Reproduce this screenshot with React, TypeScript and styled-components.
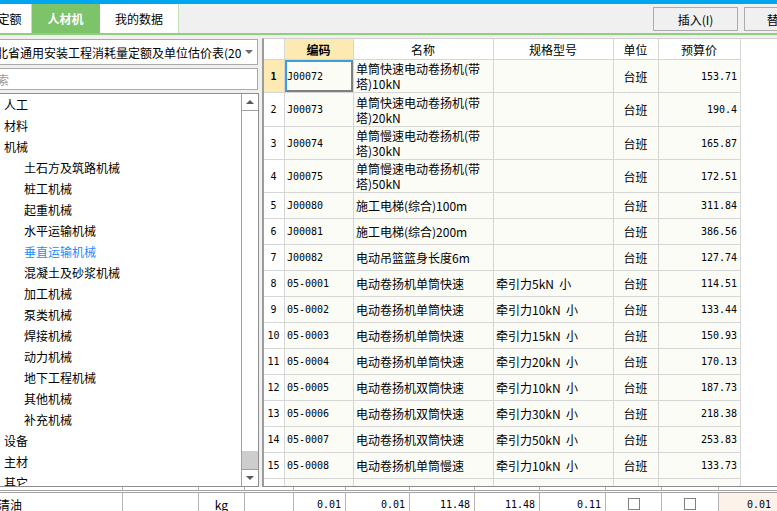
import React from "react";
import styled, { createGlobalStyle, css } from "styled-components";

const Global = createGlobalStyle`
  html, body { margin: 0; padding: 0; }
  body {
    width: 777px; height: 511px; overflow: hidden; background: #f0f0f0;
    font-family: "Noto Sans CJK SC", "Noto Sans", sans-serif; font-size: 12px; color: #000;
  }
  * { box-sizing: border-box; }
`;

const Shell = styled.div`
  width: 777px; height: 511px; display: flex; flex-direction: column;
  overflow: hidden; background: #f0f0f0;
`;

const TopLine = styled.div`
  height: 4px; flex-shrink: 0; background: #00a7ee;
`;

const Toolbar = styled.div`
  height: 31px; flex-shrink: 0; display: flex; align-items: stretch;
  border-bottom: 2px solid #8fd07c; overflow: hidden;
`;

const Tab = styled.div<{ $active?: boolean; $w: number }>`
  width: ${(p) => p.$w}px; flex-shrink: 0; display: flex; align-items: center; justify-content: center;
  background: ${(p) => (p.$active ? "#7cc36a" : "#ffffff")};
  color: ${(p) => (p.$active ? "#ffffff" : "#000000")};
  font-weight: ${(p) => (p.$active ? 700 : 400)};
  border-right: 1px solid ${(p) => (p.$active ? "#7cc36a" : "#bfe3b3")};
`;

const EdgeTab = styled(Tab)`
  margin-left: -12px;
`;

const ButtonGroup = styled.div`
  display: flex; gap: 6px; margin-left: 474px; padding-top: 3px; flex-shrink: 0;
`;

const ToolButton = styled.div`
  width: 85px; height: 24px; flex-shrink: 0; display: flex; align-items: center; justify-content: center;
  border: 1px solid #adadad; background: #f0f0f0; font-size: 12px;
`;

const Main = styled.div`
  height: 452px; flex-shrink: 0; display: flex; padding-top: 3px;
`;

const LeftPanel = styled.div`
  width: 279px; margin-left: -20px; flex-shrink: 0; display: flex; flex-direction: column; padding-top: 1px;
`;

const Select = styled.div`
  height: 26px; flex-shrink: 0; margin-right: 1px; display: flex; align-items: center;
  border: 1px solid #a9a9a9; background: #fff;
`;

const SelectText = styled.div`
  flex: 1; padding-left: 3px; white-space: nowrap; overflow: hidden;
`;

const Caret = styled.div<{ $dir: "up" | "down"; $color?: string }>`
  width: 0; height: 0; border-left: 4px solid transparent; border-right: 4px solid transparent;
  ${(p) =>
    p.$dir === "down"
      ? css`border-top: 4px solid ${p.$color || "#6d6d6d"};`
      : css`border-bottom: 4px solid ${p.$color || "#5a5a5a"};`}
`;

const SelectArrow = styled.div`
  width: 16px; flex-shrink: 0; display: flex; align-items: center; justify-content: center;
`;

const Search = styled.div`
  height: 22px; flex-shrink: 0; margin-top: 3px; margin-right: 1px; display: flex; align-items: center;
  padding-left: 4px; border: 1px solid #a9a9a9; background: #fff; color: #9a9a9a; white-space: nowrap;
`;

const TreeBox = styled.div`
  flex: 1; margin-top: 3px; display: flex; border: 1px solid #8e8e8e; background: #fff; min-height: 0;
`;

const TreeList = styled.div`
  flex: 1; overflow: hidden;
`;

const TreeItem = styled.div<{ $level: number; $active?: boolean }>`
  height: 21px; line-height: 21px; white-space: nowrap;
  padding-left: ${(p) => 23 + p.$level * 20}px;
  color: ${(p) => (p.$active ? "#1a8cff" : "#000")};
`;

const ScrollBar = styled.div`
  width: 17px; flex-shrink: 0; display: flex; flex-direction: column; border-left: 1px solid #a0a0a0; background: #fff;
`;

const ScrollButton = styled.div<{ $pos: "top" | "bottom" }>`
  height: 17px; flex-shrink: 0; display: flex; align-items: center; justify-content: center;
  background: #fff;
  ${(p) => (p.$pos === "top" ? "border-bottom: 1px solid #a0a0a0;" : "border-top: 1px solid #a0a0a0;")}
`;

const ScrollTrack = styled.div`
  flex: 1; display: flex; flex-direction: column; justify-content: flex-end;
`;

const Thumb = styled.div`
  height: 18px; background: #cdcdcd;
`;

const Splitter = styled.div`
  width: 3px; flex-shrink: 0;
`;

const Grid = styled.div`
  flex: 1; display: flex; flex-direction: column; overflow: hidden; background: #fff;
  border-left: 2px solid #9c9c9c; border-top: 1px solid #cfcfcf; border-bottom: 1px solid #8c8c8c;
`;

const COLS = "21px 69px 140px 120px 45px 82px";

const GridRow = styled.div<{ $h: number }>`
  display: grid; grid-template-columns: ${COLS}; height: ${(p) => p.$h}px; flex-shrink: 0;
`;

type Tone = "white" | "cream" | "yellow";
const toneBg: Record<Tone, string> = { white: "#ffffff", cream: "#fcfcf6", yellow: "#fde9b2" };

const Cell = styled.div<{ $align?: "left" | "center" | "right"; $tone?: Tone; $bold?: boolean; $pre?: boolean }>`
  display: flex; align-items: center; overflow: hidden;
  white-space: ${(p) => (p.$pre ? "pre" : "nowrap")};
  justify-content: ${(p) => (p.$align === "center" ? "center" : p.$align === "right" ? "flex-end" : "flex-start")};
  padding: 0 3px 0 2px; line-height: 15px;
  border-right: 1px solid #d6d6d6; border-bottom: 1px solid #d6d6d6;
  background: ${(p) => toneBg[p.$tone || "cream"]};
  font-weight: ${(p) => (p.$bold ? 700 : 400)};
`;

const FocusCell = styled(Cell)`
  box-shadow: inset 2px 2px 0 #3a9fdc, inset -2px -2px 0 #7f7f7f;
`;

const Lines = styled.div`
  display: flex; flex-direction: column;
`;

const Line = styled.span`
  display: block; height: 15px; line-height: 15px;
`;

const Mono = styled.span<{ $bold?: boolean }>`
  font-family: "DejaVu Sans Mono", "Liberation Mono", monospace; font-size: 10px;
  font-weight: ${(p) => (p.$bold ? 700 : 400)};
`;

const Bottom = styled.div`
  flex: 1; display: flex; flex-direction: column; margin-left: -20px; overflow: hidden;
`;

const BCOLS = "143px 76px 46px 49px 52px 64px 65px 65px 66px 56px 57px 60px";

const BottomRow = styled.div<{ $h: number; $sep?: boolean }>`
  display: grid; grid-template-columns: ${BCOLS}; height: ${(p) => p.$h}px; flex-shrink: 0;
  background: #fff;
  ${(p) => (p.$sep ? "border-bottom: 3px double #a3a3a3;" : "")}
`;

const BCell = styled.div<{ $align?: "left" | "center" | "right"; $tint?: boolean; $pad?: number }>`
  display: flex; align-items: center; overflow: hidden; white-space: nowrap;
  justify-content: ${(p) => (p.$align === "center" ? "center" : p.$align === "right" ? "flex-end" : "flex-start")};
  padding: 0 ${(p) => (p.$tint ? 7 : 4)}px 0 ${(p) => (p.$pad ?? 18)}px;
  border-right: 1px solid #b4b4b4;
  background: ${(p) => (p.$tint ? "#fdf2ea" : "#fff")};
`;

const Check = styled.div`
  width: 12px; height: 12px; border: 1px solid #808080; background: #fff;
`;

type Row = { code: string; name: string[]; spec?: string; price: string; h: number };

const rows: Row[] = [
  { code: "J00072", name: ["单筒快速电动卷扬机(带", "塔)10kN"], price: "153.71", h: 33 },
  { code: "J00073", name: ["单筒快速电动卷扬机(带", "塔)20kN"], price: "190.4", h: 34 },
  { code: "J00074", name: ["单筒慢速电动卷扬机(带", "塔)30kN"], price: "165.87", h: 33 },
  { code: "J00075", name: ["单筒慢速电动卷扬机(带", "塔)50kN"], price: "172.51", h: 33 },
  { code: "J00080", name: ["施工电梯(综合)100m"], price: "311.84", h: 26 },
  { code: "J00081", name: ["施工电梯(综合)200m"], price: "386.56", h: 26 },
  { code: "J00082", name: ["电动吊篮篮身长度6m"], price: "127.74", h: 26 },
  { code: "05-0001", name: ["电动卷扬机单筒快速"], spec: "牵引力5kN  小", price: "114.51", h: 26 },
  { code: "05-0002", name: ["电动卷扬机单筒快速"], spec: "牵引力10kN  小", price: "133.44", h: 26 },
  { code: "05-0003", name: ["电动卷扬机单筒快速"], spec: "牵引力15kN  小", price: "150.93", h: 26 },
  { code: "05-0004", name: ["电动卷扬机单筒快速"], spec: "牵引力20kN  小", price: "170.13", h: 26 },
  { code: "05-0005", name: ["电动卷扬机双筒快速"], spec: "牵引力10kN  小", price: "187.73", h: 26 },
  { code: "05-0006", name: ["电动卷扬机双筒快速"], spec: "牵引力30kN  小", price: "218.38", h: 26 },
  { code: "05-0007", name: ["电动卷扬机双筒快速"], spec: "牵引力50kN  小", price: "253.83", h: 26 },
  { code: "05-0008", name: ["电动卷扬机单筒慢速"], spec: "牵引力10kN  小", price: "133.73", h: 26 },
];

const tree: { label: string; level: number; active?: boolean }[] = [
  { label: "人工", level: 0 },
  { label: "材料", level: 0 },
  { label: "机械", level: 0 },
  { label: "土石方及筑路机械", level: 1 },
  { label: "桩工机械", level: 1 },
  { label: "起重机械", level: 1 },
  { label: "水平运输机械", level: 1 },
  { label: "垂直运输机械", level: 1, active: true },
  { label: "混凝土及砂浆机械", level: 1 },
  { label: "加工机械", level: 1 },
  { label: "泵类机械", level: 1 },
  { label: "焊接机械", level: 1 },
  { label: "动力机械", level: 1 },
  { label: "地下工程机械", level: 1 },
  { label: "其他机械", level: 1 },
  { label: "补充机械", level: 1 },
  { label: "设备", level: 0 },
  { label: "主材", level: 0 },
  { label: "其它", level: 0 },
];

export default function App() {
  return (
    <Shell>
      <Global />
      <TopLine />
      <Toolbar>
        <EdgeTab $w={44}>定额</EdgeTab>
        <Tab $w={68} $active>人材机</Tab>
        <Tab $w={79}>我的数据</Tab>
        <ButtonGroup>
          <ToolButton>插入(I)</ToolButton>
          <ToolButton>替换(R)</ToolButton>
        </ButtonGroup>
      </Toolbar>
      <Main>
        <LeftPanel>
          <Select>
            <SelectText>湖北省通用安装工程消耗量定额及单位估价表(2013)</SelectText>
            <SelectArrow>
              <Caret $dir="down" />
            </SelectArrow>
          </Select>
          <Search>搜索</Search>
          <TreeBox>
            <TreeList>
              {tree.map((t) => (
                <TreeItem key={t.label} $level={t.level} $active={t.active}>
                  {t.label}
                </TreeItem>
              ))}
            </TreeList>
            <ScrollBar>
              <ScrollButton $pos="top">
                <Caret $dir="up" />
              </ScrollButton>
              <ScrollTrack>
                <Thumb />
              </ScrollTrack>
              <ScrollButton $pos="bottom">
                <Caret $dir="down" $color="#5a5a5a" />
              </ScrollButton>
            </ScrollBar>
          </TreeBox>
        </LeftPanel>
        <Splitter />
        <Grid>
          <GridRow $h={21}>
            <Cell $tone="white" />
            <Cell $tone="yellow" $align="center" $bold>编码</Cell>
            <Cell $tone="white" $align="center">名称</Cell>
            <Cell $tone="white" $align="center">规格型号</Cell>
            <Cell $tone="white" $align="center">单位</Cell>
            <Cell $tone="white" $align="center">预算价</Cell>
          </GridRow>
          {rows.map((r, i) => {
            const CodeCell = i === 0 ? FocusCell : Cell;
            return (
              <GridRow key={r.code} $h={r.h}>
                <Cell $tone={i === 0 ? "yellow" : "white"} $align="center">
                  <Mono $bold={i === 0}>{i + 1}</Mono>
                </Cell>
                <CodeCell>
                  <Mono>{r.code}</Mono>
                </CodeCell>
                <Cell>
                  <Lines>
                    {r.name.map((l) => (
                      <Line key={l}>{l}</Line>
                    ))}
                  </Lines>
                </Cell>
                <Cell $pre>{r.spec || ""}</Cell>
                <Cell $align="center">台班</Cell>
                <Cell $align="right">
                  <Mono>{r.price}</Mono>
                </Cell>
              </GridRow>
            );
          })}
          <GridRow $h={26}>
            <Cell $tone="white" />
            <Cell />
            <Cell />
            <Cell />
            <Cell />
            <Cell />
          </GridRow>
        </Grid>
      </Main>
      <Bottom>
        <BottomRow $h={6} $sep>
          {Array.from({ length: 12 }).map((_, i) => (
            <BCell key={i} />
          ))}
        </BottomRow>
        <BottomRow $h={22}>
          <BCell>清油</BCell>
          <BCell />
          <BCell $align="center" $pad={4}>kg</BCell>
          <BCell />
          <BCell $align="right"><Mono>0.01</Mono></BCell>
          <BCell $align="right"><Mono>0.01</Mono></BCell>
          <BCell $align="right"><Mono>11.48</Mono></BCell>
          <BCell $align="right"><Mono>11.48</Mono></BCell>
          <BCell $align="right"><Mono>0.11</Mono></BCell>
          <BCell $align="center" $pad={4}><Check /></BCell>
          <BCell $align="center" $pad={4}><Check /></BCell>
          <BCell $align="right" $tint><Mono>0.01</Mono></BCell>
        </BottomRow>
      </Bottom>
    </Shell>
  );
}
